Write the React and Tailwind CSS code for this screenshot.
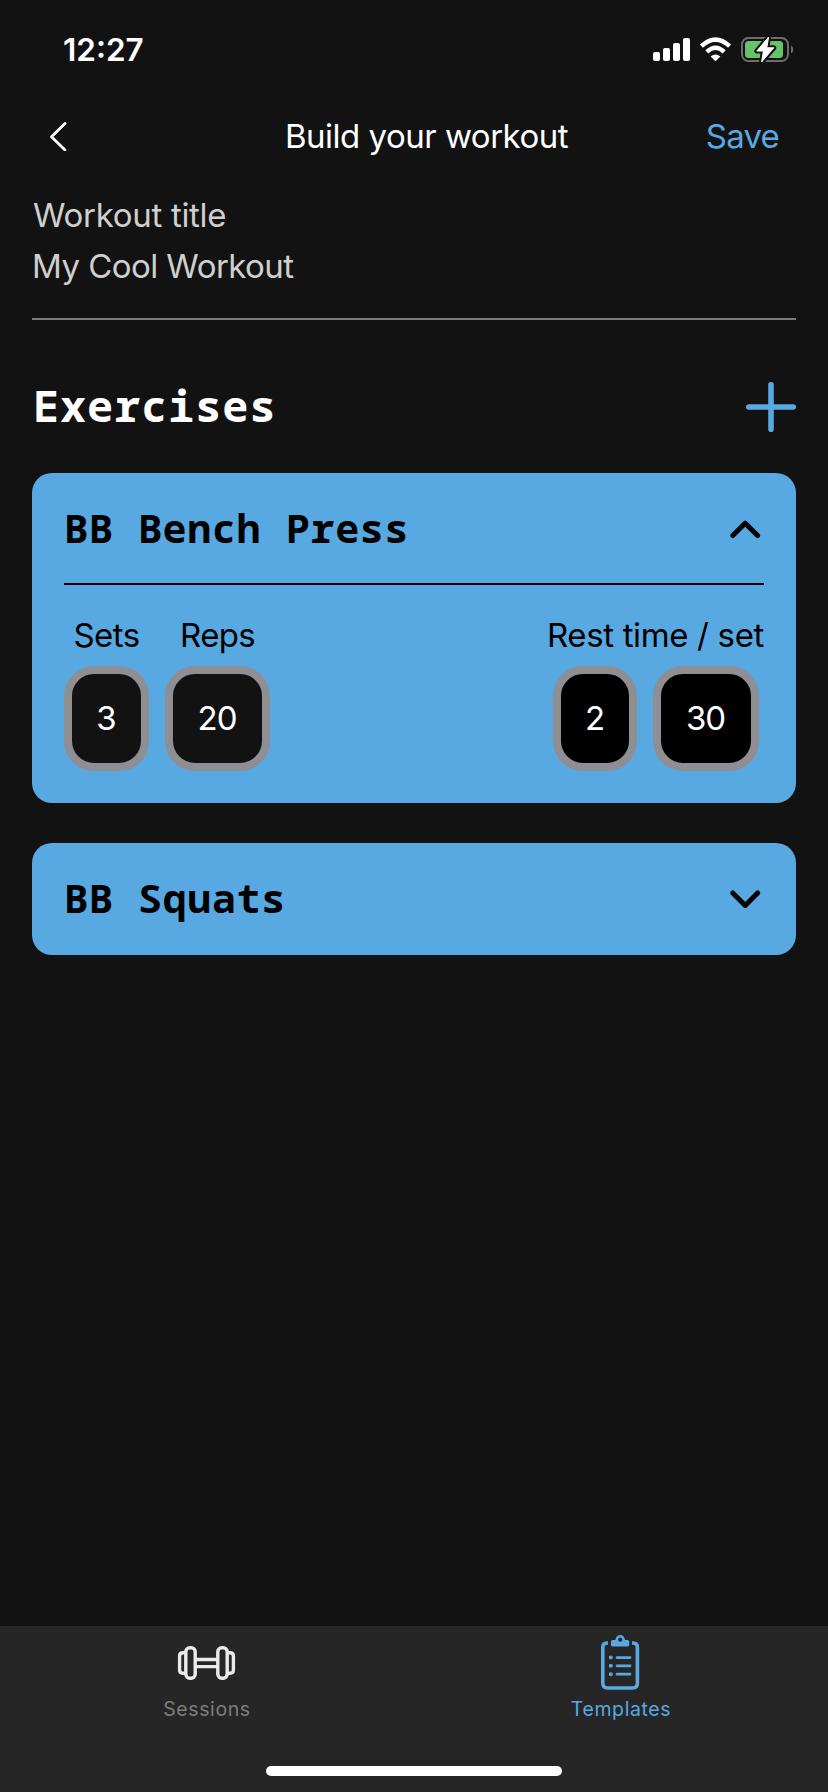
function StatusIcons() {
  return (
    <svg className="h-[30px] w-[144px]" viewBox="650 34 144 30" fill="none">
      <g fill="#fff">
        <rect x="653" y="52" width="7" height="9" rx="2" />
        <rect x="663" y="48" width="7" height="13" rx="2" />
        <rect x="673" y="43" width="7" height="18" rx="2" />
        <rect x="683" y="38" width="7" height="23" rx="2" />
        <path d="M715.5 61.2 L710.6 56.4 Q715.5 52.6 720.4 56.4 Z" />
      </g>
      <path d="M701.4 46.2 Q715.5 33 729.6 46.2" stroke="#fff" strokeWidth="4.4" />
      <path d="M706.8 51.8 Q715.5 43.8 724.2 51.8" stroke="#fff" strokeWidth="4.4" />
      <rect x="742" y="38" width="46" height="23" rx="6.5" stroke="#6d6d6d" strokeWidth="2" />
      <rect x="745" y="41" width="38" height="17" rx="3.5" fill="#65c466" />
      <path d="M791 45.5 a4.6 4.6 0 0 1 0 8 Z" fill="#6d6d6d" />
      <path d="M768.6 37 L756.8 51 H763.4 L761.6 62 L773.8 47.8 H766.8 Z" fill="#fff" stroke="#121212" strokeWidth="5" strokeLinejoin="round" />
      <path d="M768.6 37 L756.8 51 H763.4 L761.6 62 L773.8 47.8 H766.8 Z" fill="#fff" stroke="#fff" strokeWidth="1" strokeLinejoin="round" />
    </svg>
  );
}

function Chevron({ up }) {
  return (
    <svg className="mt-[3px] h-[19px] w-[32px]" viewBox="0 0 32 19" fill="none" stroke="#000" strokeWidth="5" strokeLinecap="round" strokeLinejoin="round">
      <path d={up ? "M3.8 15.6 L16.2 3.2 L28.6 15.6" : "M3.8 3 L16.2 15.4 L28.6 3"} />
    </svg>
  );
}

function Box({ className, children }) {
  return (
    <div className={"flex h-[105px] items-center justify-center rounded-[30px] border-8 border-[#8e8e93] pr-[1px] pb-[2px] tracking-[-1px] text-white " + className}>
      <span>{children}</span>
    </div>
  );
}

function CardTitle({ children }) {
  return (
    <h2 className="font-['Noto_Sans_Mono','Liberation_Mono',monospace] text-[40px] font-bold tracking-[0.65px]">
      {children}
    </h2>
  );
}

export default function App() {
  return (
    <div className="flex h-[1792px] w-[828px] flex-col bg-[#121212] font-['Inter',sans-serif] text-[33px] leading-[40px] text-white">
      <div className="flex h-[98px] items-start justify-between pt-[30px] pr-[34px] pl-[62px]">
        <span className="pl-px text-[31.5px] font-semibold">12:27</span>
        <div className="pt-1">
          <StatusIcons />
        </div>
      </div>
      <header className="grid h-[76px] grid-cols-[200px_1fr_200px] items-center pr-[49px] pl-[49px]">
        <svg className="h-[30px] w-[18px]" viewBox="0 0 18 30" fill="none" stroke="#fff" strokeWidth="2.8" strokeLinecap="round" strokeLinejoin="round">
          <path d="M16 2.4 L2.5 15.7 L16 29" />
        </svg>
        <span className="pl-[25px] text-center tracking-[-0.5px] whitespace-nowrap">Build your workout</span>
        <span className="text-right tracking-[-0.8px] text-[#58a9e1]">Save</span>
      </header>
      <section className="mx-8 flex h-[146px] flex-col border-b-2 border-[#7b7b7b] pt-[21px] text-[#cfcfcf]">
        <span className="h-[51px] pl-px tracking-[-0.3px]">Workout title</span>
        <span className="tracking-[-0.55px]">My Cool Workout</span>
      </section>
      <section className="mx-8 flex flex-1 flex-col">
        <div className="flex h-[153px] items-center justify-between pt-[21px]">
          <h1 className="pb-1 pl-px font-['Noto_Sans_Mono','Liberation_Mono',monospace] text-[43.5px] font-bold tracking-[0.95px]">Exercises</h1>
          <svg className="h-[50px] w-[50px]" viewBox="0 0 50 50" stroke="#58a9e1" strokeWidth="5.6" strokeLinecap="round">
            <path d="M25 2.8 V47.2 M2.8 25 H47.2" />
          </svg>
        </div>
        <article className="flex h-[330px] flex-col rounded-[20px] bg-[#58a9e1] px-8 text-black">
          <div className="flex h-[112px] items-center justify-between border-b-2 border-black pr-[3px]">
            <CardTitle>BB Bench Press</CardTitle>
            <Chevron up />
          </div>
          <div className="flex justify-between pt-[30px]">
            <div className="flex gap-4">
              <div className="flex w-[85px] flex-col items-center gap-[11px]">
                <span className="tracking-[-0.6px]">Sets</span>
                <Box className="w-[85px] bg-[#121212]">3</Box>
              </div>
              <div className="flex w-[105px] flex-col items-center gap-[11px]">
                <span className="tracking-[-0.7px]">Reps</span>
                <Box className="w-[105px] bg-[#121212]">20</Box>
              </div>
            </div>
            <div className="flex flex-col items-end gap-[11px]">
              <span className="tracking-[-0.35px]">Rest time / set</span>
              <div className="flex gap-4 pr-[5px]">
                <Box className="w-[84px] bg-black">2</Box>
                <Box className="w-[106px] bg-black">30</Box>
              </div>
            </div>
          </div>
        </article>
        <article className="mt-10 flex h-[112px] items-center justify-between rounded-[20px] bg-[#58a9e1] pr-[35px] pb-[2px] pl-8 text-black">
          <CardTitle>BB Squats</CardTitle>
          <Chevron />
        </article>
      </section>
      <nav className="flex h-[166px] flex-col justify-between bg-[#262626] pb-[16px]">
        <div className="grid grid-cols-2 text-[19.5px] leading-[24px]">
          <div className="flex flex-col items-center text-[#7d7d7d]">
            <svg className="h-[71px] w-[60px]" viewBox="177 1626 60 71" fill="none" stroke="#ebebeb" strokeWidth="3.4">
              <rect x="185.8" y="1647.8" width="9.4" height="30.4" rx="4" />
              <rect x="217.8" y="1647.8" width="9.4" height="30.4" rx="4" />
              <path d="M196 1659.5 H217 M196 1666.6 H217" />
              <path d="M185 1652.8 H183 Q179.6 1652.8 179.6 1656 V1670 Q179.6 1673.2 183 1673.2 H185 M228 1652.8 H230 Q233.4 1652.8 233.4 1656 V1670 Q233.4 1673.2 230 1673.2 H228" />
            </svg>
            <span className="tracking-[0.6px]">Sessions</span>
          </div>
          <div className="flex flex-col items-center text-[#58a9e1]">
            <svg className="h-[71px] w-[60px]" viewBox="591 1626 60 71" fill="none" stroke="#58a9e1" strokeWidth="3.6" strokeLinecap="round">
              <path d="M608 1643 H607 Q602.8 1643 602.8 1647.5 V1683 Q602.8 1688 607.6 1688 H632.6 Q637.4 1688 637.4 1683 V1647.5 Q637.4 1643 633.2 1643 H632" strokeLinecap="butt" />
              <path d="M611 1641.5 Q611 1640 612.6 1640 H615.4 C616 1633.4 624.4 1633.4 625 1640 H627.6 Q629.2 1640 629.2 1641.5 V1645 Q629.2 1646.4 627.8 1646.4 H612.4 Q611 1646.4 611 1645 Z M620.2 1637.6 a2.1 2.1 0 1 0 .01 0 Z" fill="#58a9e1" fillRule="evenodd" stroke="none" />
              <path d="M617 1657.6 H630 M617 1665.8 H630 M617 1674.2 H630" strokeWidth="2.8" />
              <path d="M610.8 1657.6 h.01 M610.8 1665.8 h.01 M610.8 1674.2 h.01" strokeWidth="4" />
            </svg>
            <span className="tracking-[0.6px]">Templates</span>
          </div>
        </div>
        <div className="mx-auto h-[10px] w-[296px] rounded-full bg-white" />
      </nav>
    </div>
  );
}
